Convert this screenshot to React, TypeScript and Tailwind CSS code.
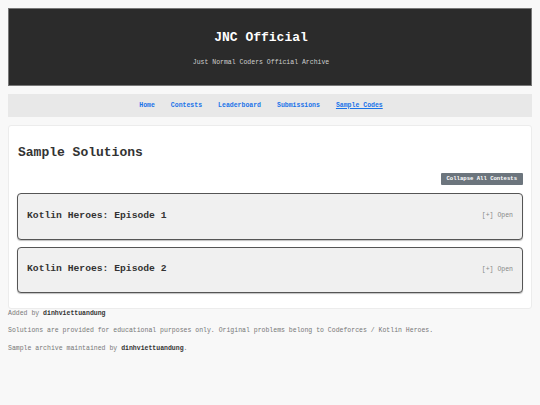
export default function App() {
  const mono = { fontFamily: '"Courier New", "Liberation Mono", monospace' };
  const episodes = ["Kotlin Heroes: Episode 1", "Kotlin Heroes: Episode 2"];
  const links = ["Home", "Contests", "Leaderboard", "Submissions", "Sample Codes"];

  return (
    <div className="min-h-[405px] bg-[#f8f8f8] p-2 text-[#333]" style={mono}>
      <header className="flex h-[78px] flex-col items-center border border-[#777] bg-[#2b2b2b] pr-[18px] pt-[21px]">
        <h1 className="text-[13px] font-bold leading-4 text-white">JNC Official</h1>
        <p className="mt-[13px] text-[6.5px] leading-2 text-[#cfcfcf]">Just Normal Coders Official Archive</p>
      </header>

      <nav className="mt-2 flex h-[23px] items-center justify-center gap-4 bg-[#e8e8e8] pr-[18px] text-[6.5px] font-bold">
        {links.map((l) => (
          <a key={l} className={l === "Sample Codes" ? "text-[#1a73e8] underline" : "text-[#1a73e8]"}>
            {l}
          </a>
        ))}
      </nav>

      <main className="mt-2 rounded-[3px] border border-[#ececec] bg-white px-2 pb-[15px] pt-[19px]">
        <h2 className="pl-[1px] text-[13px] font-bold leading-4 text-[#333]">Sample Solutions</h2>
        <div className="mt-3 flex justify-end">
          <button className="h-[12px] rounded-[1px] bg-[#6c757d] px-[6px] text-[5.6px] font-bold leading-3 text-white">
            Collapse All Contests
          </button>
        </div>
        <div className="mt-[8px] flex flex-col gap-[7px]">
          {episodes.map((e) => (
            <div
              key={e}
              className="flex h-[46.5px] items-center justify-between rounded-[4px] border-[1.5px] border-[#555] bg-[#f0f0f0] px-[9px] shadow-[0_1px_1px_rgba(0,0,0,0.25)]"
            >
              <span className="text-[9.7px] font-bold text-[#333]">{e}</span>
              <span className="text-[6.5px] text-[#888]">[+] Open</span>
            </div>
          ))}
        </div>
      </main>

      <div className="text-[6.5px] leading-2 text-[#777]">
        <p className="mt-[1px]">
          Added by <b className="text-[#333]">dinhviettuandung</b>
        </p>
        <p className="mt-[9px]">
          Solutions are provided for educational purposes only. Original problems belong to Codeforces / Kotlin Heroes.
        </p>
        <p className="mt-[10px]">
          Sample archive maintained by <b className="text-[#333]">dinhviettuandung</b>.
        </p>
      </div>
    </div>
  );
}
